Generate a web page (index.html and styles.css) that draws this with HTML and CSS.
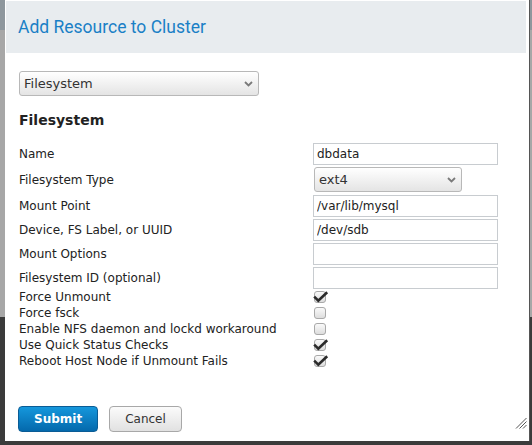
FILE: index.html
```html
<!DOCTYPE html>
<html>
<head>
<meta charset="utf-8">
<link rel="stylesheet" href="styles.css">
</head>
<body>
<div class="dialog">
  <div class="titlebar"><h1 class="title">Add Resource to Cluster</h1></div>
  <div class="content">
    <div class="select select-resource"><span>Filesystem</span><svg class="chev" width="9" height="6" viewBox="0 0 9 6"><path d="M1 1 L4.5 4.5 L8 1" fill="none" stroke="#7a7a7a" stroke-width="1.8"/></svg></div>
    <h2 class="heading">Filesystem</h2>
    <div class="form">
      <div class="row"><label class="lbl">Name</label><input class="field" type="text" value="dbdata"></div>
      <div class="row row-select"><label class="lbl">Filesystem Type</label><div class="select select-type"><span>ext4</span><svg class="chev" width="9" height="6" viewBox="0 0 9 6"><path d="M1 1 L4.5 4.5 L8 1" fill="none" stroke="#7a7a7a" stroke-width="1.8"/></svg></div></div>
      <div class="row"><label class="lbl">Mount Point</label><input class="field" type="text" value="/var/lib/mysql"></div>
      <div class="row"><label class="lbl">Device, FS Label, or UUID</label><input class="field" type="text" value="/dev/sdb"></div>
      <div class="row"><label class="lbl">Mount Options</label><input class="field" type="text" value=""></div>
      <div class="row row-last"><label class="lbl">Filesystem ID (optional)</label><input class="field" type="text" value=""></div>
      <div class="crow"><span class="lbl">Force Unmount</span><svg class="cb" width="16" height="16" viewBox="0 0 16 16"><use href="#box"/><use href="#check"/></svg></div>
      <div class="crow"><span class="lbl">Force fsck</span><svg class="cb" width="16" height="16" viewBox="0 0 16 16"><use href="#box"/></svg></div>
      <div class="crow"><span class="lbl">Enable NFS daemon and lockd workaround</span><svg class="cb" width="16" height="16" viewBox="0 0 16 16"><use href="#box"/></svg></div>
      <div class="crow"><span class="lbl">Use Quick Status Checks</span><svg class="cb" width="16" height="16" viewBox="0 0 16 16"><use href="#box"/><use href="#check"/></svg></div>
      <div class="crow"><span class="lbl">Reboot Host Node if Unmount Fails</span><svg class="cb" width="16" height="16" viewBox="0 0 16 16"><use href="#box"/><use href="#check"/></svg></div>
    </div>
  </div>
  <div class="footer">
    <button class="btn btn-primary">Submit</button>
    <button class="btn btn-default">Cancel</button>
  </div>
  <svg class="resize" width="12" height="12" viewBox="0 0 12 12"><path d="M1 11.5 L11.5 1 M4.5 11.5 L11.5 4.5 M8 11.5 L11.5 8" stroke="#555" stroke-width="1"/></svg>
</div>
<svg width="0" height="0" class="defs">
  <defs>
    <linearGradient id="cbg" x1="0" y1="0" x2="0" y2="1">
      <stop offset="0" stop-color="#fbfbfb"/>
      <stop offset="1" stop-color="#dcdcdc"/>
    </linearGradient>
    <rect id="box" x="1.5" y="2.5" width="11" height="11" rx="2.5" fill="url(#cbg)" stroke="#a9a9a9" stroke-width="1"/>
    <path id="check" d="M1.2 7.6 L5.3 11.6 L14.2 3.2" fill="none" stroke="#2b2b2b" stroke-width="2.6"/>
  </defs>
</svg>
</body>
</html>
```
FILE: styles.css
```css
html, body {
  margin: 0;
  padding: 0;
}
body {
  width: 532px;
  height: 445px;
  overflow: hidden;
  background: linear-gradient(#8e979d 0, #8e979d 30px, #a7a7a7 30px, #a7a7a7 317px, #3b3b3b 317px);
  font-family: "DejaVu Sans", sans-serif;
  color: #222;
}
.dialog {
  position: relative;
  margin-left: 5px;
  width: 524px;
  height: 441px;
  box-sizing: border-box;
  padding: 1px 3px 0 1px;
  background: #fff;
  box-shadow: 1px 0 0 #555;
}
.titlebar {
  background: #e8ecef;
  height: 52px;
  box-sizing: border-box;
  padding: 15px 12px 15px 12px;
}
.title {
  margin: 0;
  font-family: Roboto, "Open Sans", sans-serif;
  font-size: 17.5px;
  line-height: 22px;
  font-weight: normal;
  color: #1a80c6;
}
.content {
  padding-left: 13px;
}
.select {
  display: flex;
  align-items: center;
  justify-content: space-between;
  box-sizing: border-box;
  border: 1px solid #b8b8b8;
  border-radius: 3px;
  background: linear-gradient(#ffffff, #e4e4e4);
  font-size: 13px;
  color: #333;
  padding: 0 5px 0 4px;
}
.select-resource {
  margin-top: 18px;
  width: 240px;
  height: 25px;
}
.heading {
  margin: 16px 0 14px 0;
  font-size: 14px;
  line-height: 17px;
  font-weight: bold;
  color: #222;
}
.form {
  display: flex;
  flex-direction: column;
}
.row {
  display: flex;
  align-items: center;
  height: 22px;
  margin-bottom: 2px;
}
.row-select {
  height: 25px;
  margin-bottom: 3px;
}
.row-last {
  margin-bottom: 0;
}
.lbl {
  width: 294px;
  flex: none;
  font-size: 12px;
  line-height: 16px;
  color: #222;
}
.field {
  box-sizing: border-box;
  width: 185px;
  height: 22px;
  margin: 0;
  border: 1px solid #c8ccd0;
  border-radius: 0;
  padding: 0 3px;
  font-family: "DejaVu Sans", sans-serif;
  font-size: 12px;
  color: #222;
  background: #fff;
  outline: none;
}
.select-type {
  margin-left: 1px;
  width: 148px;
  height: 25px;
}
.crow {
  display: flex;
  align-items: flex-start;
  height: 16px;
}
.cb {
  display: block;
  margin-left: 0;
}
.footer {
  padding-left: 12px;
  margin-top: 37px;
  display: flex;
  gap: 11px;
}
.btn {
  box-sizing: border-box;
  height: 26px;
  margin: 0;
  padding: 0 15px;
  border-radius: 4px;
  font-family: "DejaVu Sans", sans-serif;
  font-size: 12px;
  line-height: 24px;
}
.btn-primary {
  width: 80px;
  border: 1px solid #0a5c95;
  background: linear-gradient(#1597dc, #0469ac);
  color: #fff;
  font-weight: bold;
}
.btn-default {
  width: 73px;
  border: 1px solid #a8a8a8;
  background: linear-gradient(#fbfbfb, #e1e1e1);
  color: #333;
}
.resize {
  position: absolute;
  right: 2px;
  bottom: 12px;
}
.defs {
  position: absolute;
}
```
